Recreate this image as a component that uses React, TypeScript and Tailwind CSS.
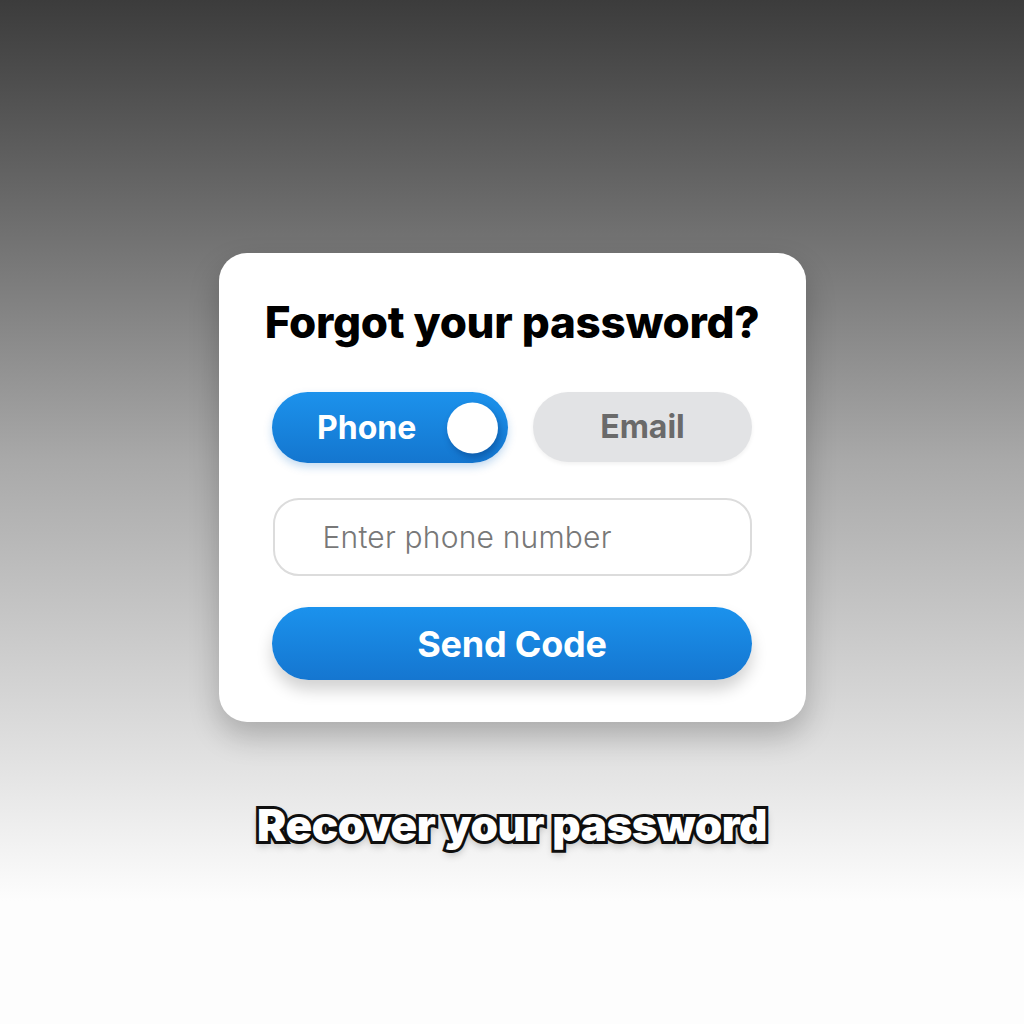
import { useState } from "react";

// ─── Method Toggle ────────────────────────────────────────────────────────────
function MethodToggle({ method, onChange }: { method: "phone" | "email"; onChange: (m: "phone" | "email") => void }) {
  return (
    <div className="flex gap-[25px]">
      <button
        onClick={() => onChange("phone")}
        className="relative flex h-[71px] w-[236px] items-center rounded-full bg-gradient-to-b from-[#1c92ec] to-[#1476cf] pl-[45px] shadow-[0_4px_8px_rgba(20,110,200,0.25)]"
      >
        <span className="text-[32px] font-bold text-white">Phone</span>
        <span className="absolute right-[10px] top-1/2 h-[51px] w-[51px] -translate-y-1/2 rounded-full bg-white shadow-[2px_4px_6px_rgba(0,40,100,0.35)]" />
      </button>
      <button
        onClick={() => onChange("email")}
        className="flex h-[70px] w-[219px] items-center justify-center rounded-full bg-[#e2e3e5] shadow-[0_2px_4px_rgba(0,0,0,0.06)]"
      >
        <span className="text-[32px] font-bold text-[#6a6a6a]">Email</span>
      </button>
    </div>
  );
}

// ─── Page ─────────────────────────────────────────────────────────────────────
export default function App() {
  const [method, setMethod] = useState<"phone" | "email">("phone");
  const [value, setValue] = useState("");

  return (
    <div
      className="flex h-[1024px] w-full flex-col items-center bg-gradient-to-b from-[#3c3c3c] via-[#a9a9a9] via-45% to-[#fdfdfd] to-88% pt-[253px]"
      style={{ fontFamily: "Inter, 'Liberation Sans', sans-serif" }}
    >
      <div className="flex h-[469px] w-[587px] flex-col items-center rounded-[28px] bg-white pt-[40px] shadow-[0_14px_30px_rgba(0,0,0,0.22)]">
        <h1 className="text-[44px] font-extrabold leading-[58px] tracking-[-0.3px] text-black">Forgot your password?</h1>

        <div className="mt-[41px]">
          <MethodToggle method={method} onChange={setMethod} />
        </div>

        <input
          type="text"
          value={value}
          onChange={(e) => setValue(e.target.value)}
          placeholder="Enter phone number"
          className="mt-[35px] h-[78px] w-[479px] rounded-[26px] border-2 border-[#dcdcdc] bg-white px-[48px] text-[30px] font-light tracking-[0.2px] text-gray-700 outline-none placeholder:text-[#787878]"
        />

        <button className="mt-[31px] flex h-[73px] w-[480px] items-center justify-center rounded-full bg-gradient-to-b from-[#1b92ed] to-[#1576d0] shadow-[0_10px_16px_rgba(0,0,0,0.18)]">
          <span className="text-[36px] font-bold tracking-[-0.2px] text-white">Send Code</span>
        </button>
      </div>

      <p className="mt-[70px] text-[44px] font-black tracking-[-0.5px] text-white [-webkit-text-stroke:6px_#111] [paint-order:stroke_fill] [text-shadow:0_4px_8px_rgba(0,0,0,0.3)]">
        Recover your password
      </p>
    </div>
  );
}
